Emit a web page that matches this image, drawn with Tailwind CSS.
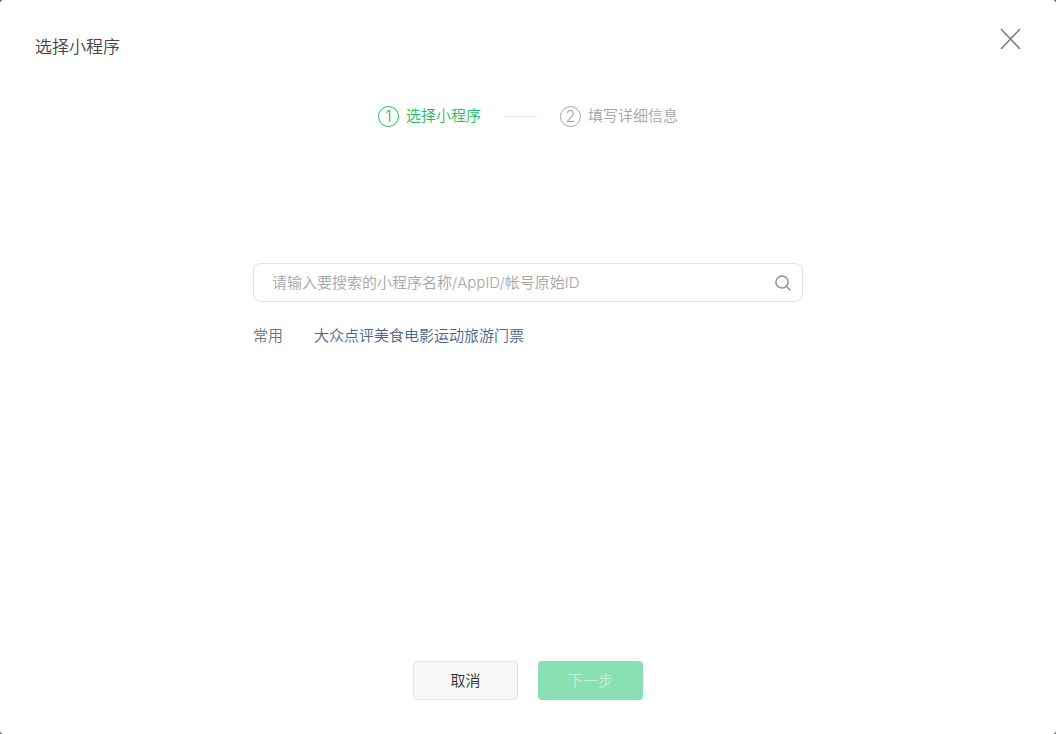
<!DOCTYPE html>
<html lang="zh-CN">
<head>
<meta charset="utf-8">
<meta name="viewport" content="width=device-width, initial-scale=1">
<title>选择小程序</title>
<script src="https://cdn.jsdelivr.net/npm/@tailwindcss/browser@4"></script>
</head>
<body class="bg-[#6f6f6f] font-['Inter','Noto_Sans_CJK_SC',sans-serif] font-[350] text-[15px] leading-6">
<div role="dialog" aria-labelledby="title" class="flex min-h-screen flex-col rounded bg-white">
  <header class="flex items-start justify-between px-[35px] pt-7">
    <h1 id="title" class="pt-[7px] text-[17px] leading-6 text-[#454545]">选择小程序</h1>
    <button type="button" aria-label="关闭" class="text-[#7b7b7b]">
      <svg class="size-[21px]" viewBox="0 0 21 21" fill="none" stroke="currentColor" stroke-width="1.6"><path d="M1 1 20 21M20 1 1 21"/></svg>
    </button>
  </header>

  <ol class="mt-[45px] flex items-center justify-center">
    <li class="flex items-center gap-[7px] text-[#1fb85f]" aria-current="step">
      <span class="flex size-[21px] items-center justify-center rounded-full border border-current text-base leading-none">1</span>
      <span>选择小程序</span>
    </li>
    <li class="mx-[23px] h-px w-[33px] bg-[#e0e0e0]" aria-hidden="true"></li>
    <li class="flex items-center gap-[7px] text-[#a6a6a6]">
      <span class="flex size-[21px] items-center justify-center rounded-full border border-current text-base leading-none">2</span>
      <span>填写详细信息</span>
    </li>
  </ol>

  <main class="mx-auto mt-[135px] w-full max-w-[550px] flex-1">
    <form class="flex h-[39px] items-center rounded-lg border border-[#e2e2e2] pr-[10px] pl-[18px]">
      <input type="text" aria-label="搜索小程序" placeholder="请输入要搜索的小程序名称/AppID/帐号原始ID" class="min-w-0 flex-1 bg-transparent leading-6 text-[#353535] outline-none placeholder:text-[#a6a6a6]">
      <button type="submit" aria-label="搜索" class="text-[#939393]">
        <svg class="size-[18px]" viewBox="0 0 18 18" fill="none" stroke="currentColor" stroke-width="1.5"><circle cx="8" cy="8" r="6.1"/><path d="m12.3 12.3 4.2 4.2"/></svg>
      </button>
    </form>
    <div class="mt-[22px] flex gap-[31px]">
      <span class="text-[#6f6f6f]">常用</span>
      <a href="#" class="text-[#4c628f]">大众点评美食电影运动旅游门票</a>
    </div>
  </main>

  <footer class="flex justify-center gap-5 pb-[34px]">
    <button type="button" class="h-[39px] w-[105px] rounded border border-[#e2e4e6] bg-[#f6f7f9] text-[#303030]">取消</button>
    <button type="button" disabled class="h-[39px] w-[105px] rounded bg-[#89e0b3] text-[#c4f0d9]">下一步</button>
  </footer>
</div>
</body>
</html>
